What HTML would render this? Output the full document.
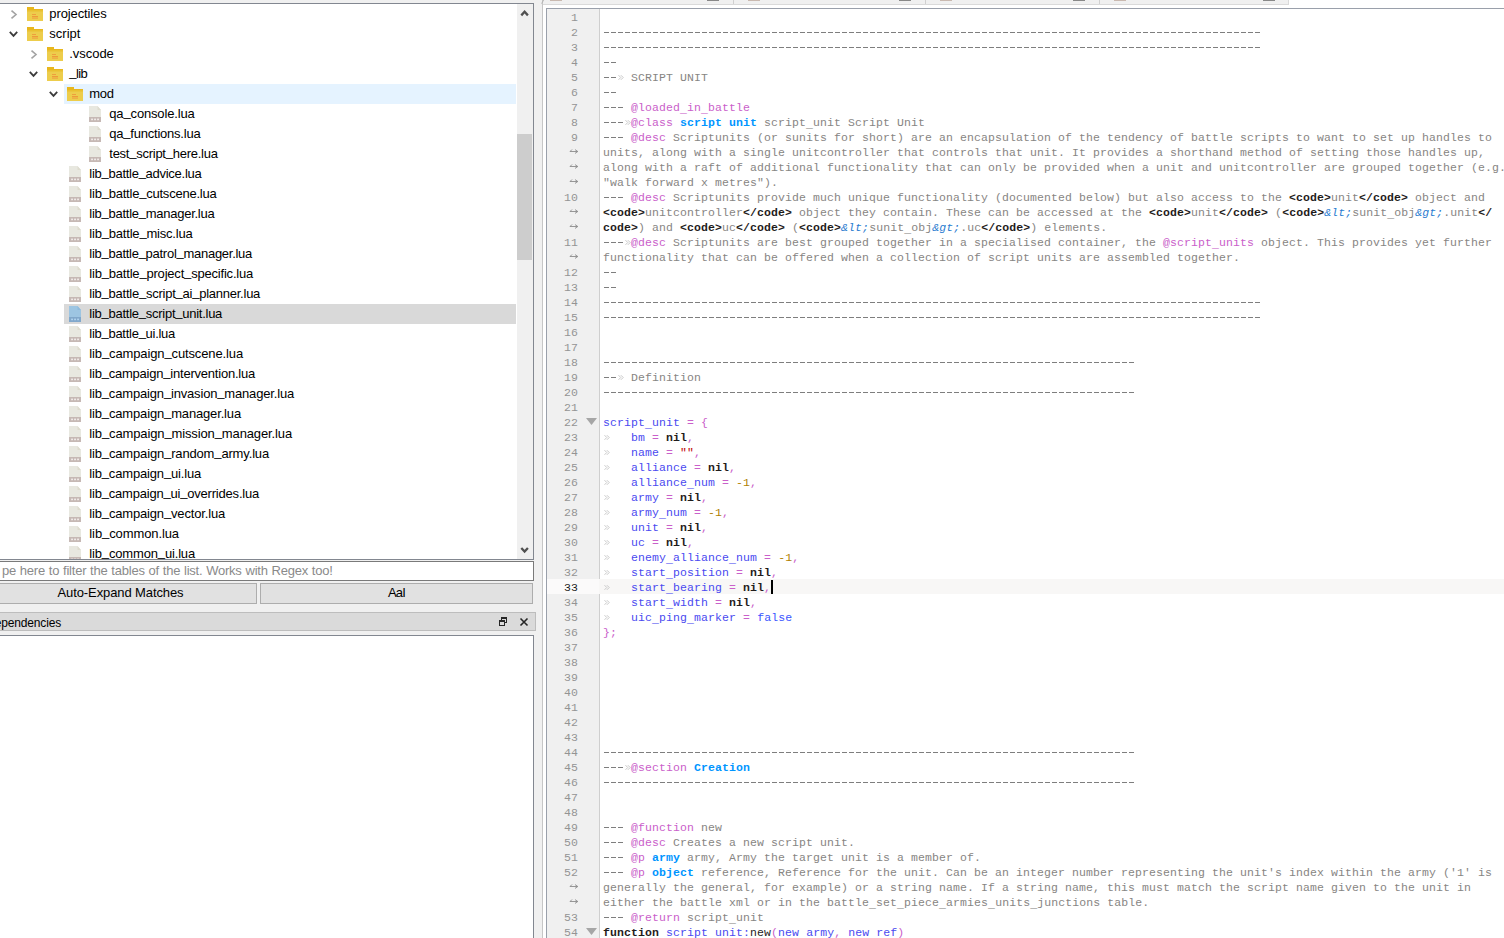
<!DOCTYPE html>
<html><head><meta charset="utf-8"><title>RPFM</title>
<style>
html,body{margin:0;padding:0}
body{width:1504px;height:938px;overflow:hidden;position:relative;background:#f0f0f0;font-family:"Liberation Sans",sans-serif;font-size:13px;color:#000}
.abs{position:absolute;box-sizing:border-box}
.tl{position:absolute;height:20px;line-height:20px;white-space:pre;font-size:13px;color:#000}
.ic,.ar{display:block}
#tree{left:-2px;top:3px;width:536px;height:557px;border:1px solid #828790;background:#fff}
#sb{left:517px;top:4px;width:16px;height:555px;background:#f0f0f0}
#thumb{left:517px;top:134px;width:15px;height:126px;background:#cdcdcd}
#filter{left:-2px;top:561px;width:536px;height:20px;border:1px solid #7a7a7a;background:#fff}
.btn{height:21px;top:583px;border:1px solid #adadad;background:#e1e1e1;text-align:center;line-height:18px;white-space:pre}
#dephead{left:-2px;top:612px;width:538px;height:19px;background:#dadada;border:1px solid #bdbdbd}
#dep{left:-2px;top:635px;width:536px;height:320px;border:1px solid #828790;background:#fff}
#tabpane{left:542px;top:-2px;width:980px;height:956px;border:1px solid #c6c6c6;background:#fff}
#editor{left:546px;top:8px;width:980px;height:950px;border:1px solid #9aa0ab;background:#fff;overflow:hidden}
#gutter{left:547px;top:9px;width:53px;height:940px;background:#f0f0f0;border-right:1px solid #cfcfcf}
#code{left:547px;top:9px;width:957px;height:929px;font-family:"Liberation Mono",monospace;font-size:11.5px;letter-spacing:0.099px;overflow:hidden}
.row{position:absolute;left:0;width:957px;height:15px;line-height:15px;white-space:pre}
.row.cur{background:#f8f7f6}
.g{position:absolute;left:0;top:0;width:52px;height:15px;color:#949494}
.row.cur .g{background:#fbfafa;color:#1e1e1e}
.ln{position:absolute;right:21px;top:1px}
.tx{position:absolute;left:56px;top:1px;height:15px;color:#1f1c1b}
.c{color:#878583}
.d{display:inline-block;height:13px;vertical-align:top;color:transparent;background:repeating-linear-gradient(90deg,rgba(128,128,128,0) 0,rgba(128,128,128,0) 0.6px,#7e7e7e 1.1px,#7e7e7e 5.9px,rgba(128,128,128,0) 6.4px,rgba(128,128,128,0) 7px) 0 7px/100% 1px no-repeat}
.a{color:#ca60ca}
.e{color:#0095ff;font-weight:bold}
i.u{font-style:normal;color:transparent}
i.us{font-style:normal;position:relative;top:2px}
i.tu{font-style:normal;position:relative;top:-2px}
.k{color:#1f1c1b;font-weight:bold}
.v{color:#4a4af0}
.o{color:#ca60ca}
.n{color:#b08000}
.s{color:#bf0303}
.en{color:#2a7cd0;font-style:italic}
.f{color:#3a55ff}
.t{display:inline-block;height:15px;vertical-align:top;position:relative}
.t svg{position:absolute;left:1px;top:5px}
.caret{display:inline-block;width:2px;height:14px;background:#000;vertical-align:top;margin-right:-2px}
</style></head><body>
<!-- left: file tree -->
<div id="tree" class="abs"></div>
<div class="abs" style="left:0;top:0;width:533px;height:559px;overflow:hidden">

<div style="position:absolute;left:9px;top:8px"><svg class="ar" width="9" height="12" viewBox="0 0 9 12"><path d="M2.5 2.7L7 6.5L2.5 10.3" fill="none" stroke="#a3a3a3" stroke-width="1.6"/></svg></div>
<div style="position:absolute;left:27px;top:7px"><svg class="ic" width="16" height="14" viewBox="0 0 16 14"><rect x="0" y="0" width="7" height="3" fill="#e8b71e"/><rect x="0" y="2" width="16" height="12" fill="#edcd4c"/><rect x="0" y="2" width="16" height="1.6" fill="#e8b71e"/><rect x="0" y="3.6" width="16" height="1" fill="#eac236"/><rect x="5" y="7" width="4" height="1" fill="#ee9e3e"/><rect x="5" y="9" width="6" height="1.4" fill="#ee9a3a"/><rect x="5" y="11" width="6" height="1" fill="#efae48"/></svg></div>
<div class="tl" style="left:49.3px;top:4px;letter-spacing:-0.112px">projectiles</div>

<div style="position:absolute;left:8px;top:31px"><svg class="ar" width="11" height="7" viewBox="0 0 11 7"><path d="M1.8 0.8L5.5 4.8L9.2 0.8" fill="none" stroke="#3c3c3c" stroke-width="1.8"/></svg></div>
<div style="position:absolute;left:27px;top:27px"><svg class="ic" width="16" height="14" viewBox="0 0 16 14"><rect x="0" y="0" width="7" height="3" fill="#e8b71e"/><rect x="0" y="2" width="16" height="12" fill="#edcd4c"/><rect x="0" y="2" width="16" height="1.6" fill="#e8b71e"/><rect x="0" y="3.6" width="16" height="1" fill="#eac236"/><rect x="5" y="7" width="4" height="1" fill="#ee9e3e"/><rect x="5" y="9" width="6" height="1.4" fill="#ee9a3a"/><rect x="5" y="11" width="6" height="1" fill="#efae48"/></svg></div>
<div class="tl" style="left:49.3px;top:24px;letter-spacing:0.006px">script</div>

<div style="position:absolute;left:29px;top:48px"><svg class="ar" width="9" height="12" viewBox="0 0 9 12"><path d="M2.5 2.7L7 6.5L2.5 10.3" fill="none" stroke="#a3a3a3" stroke-width="1.6"/></svg></div>
<div style="position:absolute;left:47px;top:47px"><svg class="ic" width="16" height="14" viewBox="0 0 16 14"><rect x="0" y="0" width="7" height="3" fill="#e8b71e"/><rect x="0" y="2" width="16" height="12" fill="#edcd4c"/><rect x="0" y="2" width="16" height="1.6" fill="#e8b71e"/><rect x="0" y="3.6" width="16" height="1" fill="#eac236"/><rect x="5" y="7" width="4" height="1" fill="#ee9e3e"/><rect x="5" y="9" width="6" height="1.4" fill="#ee9a3a"/><rect x="5" y="11" width="6" height="1" fill="#efae48"/></svg></div>
<div class="tl" style="left:69.3px;top:44px;letter-spacing:-0.045px">.vscode</div>

<div style="position:absolute;left:28px;top:71px"><svg class="ar" width="11" height="7" viewBox="0 0 11 7"><path d="M1.8 0.8L5.5 4.8L9.2 0.8" fill="none" stroke="#3c3c3c" stroke-width="1.8"/></svg></div>
<div style="position:absolute;left:47px;top:67px"><svg class="ic" width="16" height="14" viewBox="0 0 16 14"><rect x="0" y="0" width="7" height="3" fill="#e8b71e"/><rect x="0" y="2" width="16" height="12" fill="#edcd4c"/><rect x="0" y="2" width="16" height="1.6" fill="#e8b71e"/><rect x="0" y="3.6" width="16" height="1" fill="#eac236"/><rect x="5" y="7" width="4" height="1" fill="#ee9e3e"/><rect x="5" y="9" width="6" height="1.4" fill="#ee9a3a"/><rect x="5" y="11" width="6" height="1" fill="#efae48"/></svg></div>
<div class="tl" style="left:69.3px;top:64px;letter-spacing:-0.562px"><i class="tu">_</i>lib</div>
<div style="position:absolute;left:64px;top:84px;width:452px;height:20px;background:#e5f3ff"></div>
<div style="position:absolute;left:48px;top:91px"><svg class="ar" width="11" height="7" viewBox="0 0 11 7"><path d="M1.8 0.8L5.5 4.8L9.2 0.8" fill="none" stroke="#3c3c3c" stroke-width="1.8"/></svg></div>
<div style="position:absolute;left:67px;top:87px"><svg class="ic" width="16" height="14" viewBox="0 0 16 14"><rect x="0" y="0" width="7" height="3" fill="#e8b71e"/><rect x="0" y="2" width="16" height="12" fill="#edcd4c"/><rect x="0" y="2" width="16" height="1.6" fill="#e8b71e"/><rect x="0" y="3.6" width="16" height="1" fill="#eac236"/><rect x="5" y="7" width="4" height="1" fill="#ee9e3e"/><rect x="5" y="9" width="6" height="1.4" fill="#ee9a3a"/><rect x="5" y="11" width="6" height="1" fill="#efae48"/></svg></div>
<div class="tl" style="left:89.3px;top:84px;letter-spacing:-0.266px">mod</div>

<div style="position:absolute;left:89px;top:106px"><svg class="ic" width="12" height="16" viewBox="0 0 12 16"><path d="M0 0h8.5l3.5 4v8H0z" fill="#e8e8e0"/><path d="M8.5 0v4h3.5z" fill="#dedccf"/><rect x="0" y="11" width="12" height="5" fill="#c6b9b5"/><rect x="2.2" y="12.6" width="1.7" height="1.6" fill="#f4f0ee"/><rect x="5.2" y="12.6" width="1.7" height="1.6" fill="#f4f0ee"/><rect x="8.2" y="12.6" width="1.7" height="1.6" fill="#f4f0ee"/></svg></div>
<div class="tl" style="left:109.3px;top:104px;letter-spacing:-0.155px">qa<i class="tu">_</i>console.lua</div>

<div style="position:absolute;left:89px;top:126px"><svg class="ic" width="12" height="16" viewBox="0 0 12 16"><path d="M0 0h8.5l3.5 4v8H0z" fill="#e8e8e0"/><path d="M8.5 0v4h3.5z" fill="#dedccf"/><rect x="0" y="11" width="12" height="5" fill="#c6b9b5"/><rect x="2.2" y="12.6" width="1.7" height="1.6" fill="#f4f0ee"/><rect x="5.2" y="12.6" width="1.7" height="1.6" fill="#f4f0ee"/><rect x="8.2" y="12.6" width="1.7" height="1.6" fill="#f4f0ee"/></svg></div>
<div class="tl" style="left:109.3px;top:124px;letter-spacing:-0.224px">qa<i class="tu">_</i>functions.lua</div>

<div style="position:absolute;left:89px;top:146px"><svg class="ic" width="12" height="16" viewBox="0 0 12 16"><path d="M0 0h8.5l3.5 4v8H0z" fill="#e8e8e0"/><path d="M8.5 0v4h3.5z" fill="#dedccf"/><rect x="0" y="11" width="12" height="5" fill="#c6b9b5"/><rect x="2.2" y="12.6" width="1.7" height="1.6" fill="#f4f0ee"/><rect x="5.2" y="12.6" width="1.7" height="1.6" fill="#f4f0ee"/><rect x="8.2" y="12.6" width="1.7" height="1.6" fill="#f4f0ee"/></svg></div>
<div class="tl" style="left:109.3px;top:144px;letter-spacing:-0.258px">test<i class="tu">_</i>script<i class="tu">_</i>here.lua</div>

<div style="position:absolute;left:69px;top:166px"><svg class="ic" width="12" height="16" viewBox="0 0 12 16"><path d="M0 0h8.5l3.5 4v8H0z" fill="#e8e8e0"/><path d="M8.5 0v4h3.5z" fill="#dedccf"/><rect x="0" y="11" width="12" height="5" fill="#c6b9b5"/><rect x="2.2" y="12.6" width="1.7" height="1.6" fill="#f4f0ee"/><rect x="5.2" y="12.6" width="1.7" height="1.6" fill="#f4f0ee"/><rect x="8.2" y="12.6" width="1.7" height="1.6" fill="#f4f0ee"/></svg></div>
<div class="tl" style="left:89.3px;top:164px;letter-spacing:-0.272px">lib<i class="tu">_</i>battle<i class="tu">_</i>advice.lua</div>

<div style="position:absolute;left:69px;top:186px"><svg class="ic" width="12" height="16" viewBox="0 0 12 16"><path d="M0 0h8.5l3.5 4v8H0z" fill="#e8e8e0"/><path d="M8.5 0v4h3.5z" fill="#dedccf"/><rect x="0" y="11" width="12" height="5" fill="#c6b9b5"/><rect x="2.2" y="12.6" width="1.7" height="1.6" fill="#f4f0ee"/><rect x="5.2" y="12.6" width="1.7" height="1.6" fill="#f4f0ee"/><rect x="8.2" y="12.6" width="1.7" height="1.6" fill="#f4f0ee"/></svg></div>
<div class="tl" style="left:89.3px;top:184px;letter-spacing:-0.220px">lib<i class="tu">_</i>battle<i class="tu">_</i>cutscene.lua</div>

<div style="position:absolute;left:69px;top:206px"><svg class="ic" width="12" height="16" viewBox="0 0 12 16"><path d="M0 0h8.5l3.5 4v8H0z" fill="#e8e8e0"/><path d="M8.5 0v4h3.5z" fill="#dedccf"/><rect x="0" y="11" width="12" height="5" fill="#c6b9b5"/><rect x="2.2" y="12.6" width="1.7" height="1.6" fill="#f4f0ee"/><rect x="5.2" y="12.6" width="1.7" height="1.6" fill="#f4f0ee"/><rect x="8.2" y="12.6" width="1.7" height="1.6" fill="#f4f0ee"/></svg></div>
<div class="tl" style="left:89.3px;top:204px;letter-spacing:-0.260px">lib<i class="tu">_</i>battle<i class="tu">_</i>manager.lua</div>

<div style="position:absolute;left:69px;top:226px"><svg class="ic" width="12" height="16" viewBox="0 0 12 16"><path d="M0 0h8.5l3.5 4v8H0z" fill="#e8e8e0"/><path d="M8.5 0v4h3.5z" fill="#dedccf"/><rect x="0" y="11" width="12" height="5" fill="#c6b9b5"/><rect x="2.2" y="12.6" width="1.7" height="1.6" fill="#f4f0ee"/><rect x="5.2" y="12.6" width="1.7" height="1.6" fill="#f4f0ee"/><rect x="8.2" y="12.6" width="1.7" height="1.6" fill="#f4f0ee"/></svg></div>
<div class="tl" style="left:89.3px;top:224px;letter-spacing:-0.198px">lib<i class="tu">_</i>battle<i class="tu">_</i>misc.lua</div>

<div style="position:absolute;left:69px;top:246px"><svg class="ic" width="12" height="16" viewBox="0 0 12 16"><path d="M0 0h8.5l3.5 4v8H0z" fill="#e8e8e0"/><path d="M8.5 0v4h3.5z" fill="#dedccf"/><rect x="0" y="11" width="12" height="5" fill="#c6b9b5"/><rect x="2.2" y="12.6" width="1.7" height="1.6" fill="#f4f0ee"/><rect x="5.2" y="12.6" width="1.7" height="1.6" fill="#f4f0ee"/><rect x="8.2" y="12.6" width="1.7" height="1.6" fill="#f4f0ee"/></svg></div>
<div class="tl" style="left:89.3px;top:244px;letter-spacing:-0.272px">lib<i class="tu">_</i>battle<i class="tu">_</i>patrol<i class="tu">_</i>manager.lua</div>

<div style="position:absolute;left:69px;top:266px"><svg class="ic" width="12" height="16" viewBox="0 0 12 16"><path d="M0 0h8.5l3.5 4v8H0z" fill="#e8e8e0"/><path d="M8.5 0v4h3.5z" fill="#dedccf"/><rect x="0" y="11" width="12" height="5" fill="#c6b9b5"/><rect x="2.2" y="12.6" width="1.7" height="1.6" fill="#f4f0ee"/><rect x="5.2" y="12.6" width="1.7" height="1.6" fill="#f4f0ee"/><rect x="8.2" y="12.6" width="1.7" height="1.6" fill="#f4f0ee"/></svg></div>
<div class="tl" style="left:89.3px;top:264px;letter-spacing:-0.198px">lib<i class="tu">_</i>battle<i class="tu">_</i>project<i class="tu">_</i>specific.lua</div>

<div style="position:absolute;left:69px;top:286px"><svg class="ic" width="12" height="16" viewBox="0 0 12 16"><path d="M0 0h8.5l3.5 4v8H0z" fill="#e8e8e0"/><path d="M8.5 0v4h3.5z" fill="#dedccf"/><rect x="0" y="11" width="12" height="5" fill="#c6b9b5"/><rect x="2.2" y="12.6" width="1.7" height="1.6" fill="#f4f0ee"/><rect x="5.2" y="12.6" width="1.7" height="1.6" fill="#f4f0ee"/><rect x="8.2" y="12.6" width="1.7" height="1.6" fill="#f4f0ee"/></svg></div>
<div class="tl" style="left:89.3px;top:284px;letter-spacing:-0.244px">lib<i class="tu">_</i>battle<i class="tu">_</i>script<i class="tu">_</i>ai<i class="tu">_</i>planner.lua</div>
<div style="position:absolute;left:64px;top:304px;width:452px;height:20px;background:#d9d9d9"></div>
<div style="position:absolute;left:69px;top:306px"><svg class="ic" width="12" height="16" viewBox="0 0 12 16"><path d="M0 0h8.5l3.5 4v8H0z" fill="#9dc5e2"/><path d="M8.5 0v4h3.5z" fill="#8fbadb"/><rect x="0" y="11" width="12" height="5" fill="#81a8cb"/><rect x="2.2" y="12.6" width="1.7" height="1.6" fill="#b4d6f2"/><rect x="5.2" y="12.6" width="1.7" height="1.6" fill="#b4d6f2"/><rect x="8.2" y="12.6" width="1.7" height="1.6" fill="#b4d6f2"/></svg></div>
<div class="tl" style="left:89.3px;top:304px;letter-spacing:-0.261px">lib<i class="tu">_</i>battle<i class="tu">_</i>script<i class="tu">_</i>unit.lua</div>

<div style="position:absolute;left:69px;top:326px"><svg class="ic" width="12" height="16" viewBox="0 0 12 16"><path d="M0 0h8.5l3.5 4v8H0z" fill="#e8e8e0"/><path d="M8.5 0v4h3.5z" fill="#dedccf"/><rect x="0" y="11" width="12" height="5" fill="#c6b9b5"/><rect x="2.2" y="12.6" width="1.7" height="1.6" fill="#f4f0ee"/><rect x="5.2" y="12.6" width="1.7" height="1.6" fill="#f4f0ee"/><rect x="8.2" y="12.6" width="1.7" height="1.6" fill="#f4f0ee"/></svg></div>
<div class="tl" style="left:89.3px;top:324px;letter-spacing:-0.274px">lib<i class="tu">_</i>battle<i class="tu">_</i>ui.lua</div>

<div style="position:absolute;left:69px;top:346px"><svg class="ic" width="12" height="16" viewBox="0 0 12 16"><path d="M0 0h8.5l3.5 4v8H0z" fill="#e8e8e0"/><path d="M8.5 0v4h3.5z" fill="#dedccf"/><rect x="0" y="11" width="12" height="5" fill="#c6b9b5"/><rect x="2.2" y="12.6" width="1.7" height="1.6" fill="#f4f0ee"/><rect x="5.2" y="12.6" width="1.7" height="1.6" fill="#f4f0ee"/><rect x="8.2" y="12.6" width="1.7" height="1.6" fill="#f4f0ee"/></svg></div>
<div class="tl" style="left:89.3px;top:344px;letter-spacing:-0.125px">lib<i class="tu">_</i>campaign<i class="tu">_</i>cutscene.lua</div>

<div style="position:absolute;left:69px;top:366px"><svg class="ic" width="12" height="16" viewBox="0 0 12 16"><path d="M0 0h8.5l3.5 4v8H0z" fill="#e8e8e0"/><path d="M8.5 0v4h3.5z" fill="#dedccf"/><rect x="0" y="11" width="12" height="5" fill="#c6b9b5"/><rect x="2.2" y="12.6" width="1.7" height="1.6" fill="#f4f0ee"/><rect x="5.2" y="12.6" width="1.7" height="1.6" fill="#f4f0ee"/><rect x="8.2" y="12.6" width="1.7" height="1.6" fill="#f4f0ee"/></svg></div>
<div class="tl" style="left:89.3px;top:364px;letter-spacing:-0.218px">lib<i class="tu">_</i>campaign<i class="tu">_</i>intervention.lua</div>

<div style="position:absolute;left:69px;top:386px"><svg class="ic" width="12" height="16" viewBox="0 0 12 16"><path d="M0 0h8.5l3.5 4v8H0z" fill="#e8e8e0"/><path d="M8.5 0v4h3.5z" fill="#dedccf"/><rect x="0" y="11" width="12" height="5" fill="#c6b9b5"/><rect x="2.2" y="12.6" width="1.7" height="1.6" fill="#f4f0ee"/><rect x="5.2" y="12.6" width="1.7" height="1.6" fill="#f4f0ee"/><rect x="8.2" y="12.6" width="1.7" height="1.6" fill="#f4f0ee"/></svg></div>
<div class="tl" style="left:89.3px;top:384px;letter-spacing:-0.170px">lib<i class="tu">_</i>campaign<i class="tu">_</i>invasion<i class="tu">_</i>manager.lua</div>

<div style="position:absolute;left:69px;top:406px"><svg class="ic" width="12" height="16" viewBox="0 0 12 16"><path d="M0 0h8.5l3.5 4v8H0z" fill="#e8e8e0"/><path d="M8.5 0v4h3.5z" fill="#dedccf"/><rect x="0" y="11" width="12" height="5" fill="#c6b9b5"/><rect x="2.2" y="12.6" width="1.7" height="1.6" fill="#f4f0ee"/><rect x="5.2" y="12.6" width="1.7" height="1.6" fill="#f4f0ee"/><rect x="8.2" y="12.6" width="1.7" height="1.6" fill="#f4f0ee"/></svg></div>
<div class="tl" style="left:89.3px;top:404px;letter-spacing:-0.154px">lib<i class="tu">_</i>campaign<i class="tu">_</i>manager.lua</div>

<div style="position:absolute;left:69px;top:426px"><svg class="ic" width="12" height="16" viewBox="0 0 12 16"><path d="M0 0h8.5l3.5 4v8H0z" fill="#e8e8e0"/><path d="M8.5 0v4h3.5z" fill="#dedccf"/><rect x="0" y="11" width="12" height="5" fill="#c6b9b5"/><rect x="2.2" y="12.6" width="1.7" height="1.6" fill="#f4f0ee"/><rect x="5.2" y="12.6" width="1.7" height="1.6" fill="#f4f0ee"/><rect x="8.2" y="12.6" width="1.7" height="1.6" fill="#f4f0ee"/></svg></div>
<div class="tl" style="left:89.3px;top:424px;letter-spacing:-0.125px">lib<i class="tu">_</i>campaign<i class="tu">_</i>mission<i class="tu">_</i>manager.lua</div>

<div style="position:absolute;left:69px;top:446px"><svg class="ic" width="12" height="16" viewBox="0 0 12 16"><path d="M0 0h8.5l3.5 4v8H0z" fill="#e8e8e0"/><path d="M8.5 0v4h3.5z" fill="#dedccf"/><rect x="0" y="11" width="12" height="5" fill="#c6b9b5"/><rect x="2.2" y="12.6" width="1.7" height="1.6" fill="#f4f0ee"/><rect x="5.2" y="12.6" width="1.7" height="1.6" fill="#f4f0ee"/><rect x="8.2" y="12.6" width="1.7" height="1.6" fill="#f4f0ee"/></svg></div>
<div class="tl" style="left:89.3px;top:444px;letter-spacing:-0.155px">lib<i class="tu">_</i>campaign<i class="tu">_</i>random<i class="tu">_</i>army.lua</div>

<div style="position:absolute;left:69px;top:466px"><svg class="ic" width="12" height="16" viewBox="0 0 12 16"><path d="M0 0h8.5l3.5 4v8H0z" fill="#e8e8e0"/><path d="M8.5 0v4h3.5z" fill="#dedccf"/><rect x="0" y="11" width="12" height="5" fill="#c6b9b5"/><rect x="2.2" y="12.6" width="1.7" height="1.6" fill="#f4f0ee"/><rect x="5.2" y="12.6" width="1.7" height="1.6" fill="#f4f0ee"/><rect x="8.2" y="12.6" width="1.7" height="1.6" fill="#f4f0ee"/></svg></div>
<div class="tl" style="left:89.3px;top:464px;letter-spacing:-0.170px">lib<i class="tu">_</i>campaign<i class="tu">_</i>ui.lua</div>

<div style="position:absolute;left:69px;top:486px"><svg class="ic" width="12" height="16" viewBox="0 0 12 16"><path d="M0 0h8.5l3.5 4v8H0z" fill="#e8e8e0"/><path d="M8.5 0v4h3.5z" fill="#dedccf"/><rect x="0" y="11" width="12" height="5" fill="#c6b9b5"/><rect x="2.2" y="12.6" width="1.7" height="1.6" fill="#f4f0ee"/><rect x="5.2" y="12.6" width="1.7" height="1.6" fill="#f4f0ee"/><rect x="8.2" y="12.6" width="1.7" height="1.6" fill="#f4f0ee"/></svg></div>
<div class="tl" style="left:89.3px;top:484px;letter-spacing:-0.204px">lib<i class="tu">_</i>campaign<i class="tu">_</i>ui<i class="tu">_</i>overrides.lua</div>

<div style="position:absolute;left:69px;top:506px"><svg class="ic" width="12" height="16" viewBox="0 0 12 16"><path d="M0 0h8.5l3.5 4v8H0z" fill="#e8e8e0"/><path d="M8.5 0v4h3.5z" fill="#dedccf"/><rect x="0" y="11" width="12" height="5" fill="#c6b9b5"/><rect x="2.2" y="12.6" width="1.7" height="1.6" fill="#f4f0ee"/><rect x="5.2" y="12.6" width="1.7" height="1.6" fill="#f4f0ee"/><rect x="8.2" y="12.6" width="1.7" height="1.6" fill="#f4f0ee"/></svg></div>
<div class="tl" style="left:89.3px;top:504px;letter-spacing:-0.165px">lib<i class="tu">_</i>campaign<i class="tu">_</i>vector.lua</div>

<div style="position:absolute;left:69px;top:526px"><svg class="ic" width="12" height="16" viewBox="0 0 12 16"><path d="M0 0h8.5l3.5 4v8H0z" fill="#e8e8e0"/><path d="M8.5 0v4h3.5z" fill="#dedccf"/><rect x="0" y="11" width="12" height="5" fill="#c6b9b5"/><rect x="2.2" y="12.6" width="1.7" height="1.6" fill="#f4f0ee"/><rect x="5.2" y="12.6" width="1.7" height="1.6" fill="#f4f0ee"/><rect x="8.2" y="12.6" width="1.7" height="1.6" fill="#f4f0ee"/></svg></div>
<div class="tl" style="left:89.3px;top:524px;letter-spacing:-0.096px">lib<i class="tu">_</i>common.lua</div>

<div style="position:absolute;left:69px;top:546px"><svg class="ic" width="12" height="16" viewBox="0 0 12 16"><path d="M0 0h8.5l3.5 4v8H0z" fill="#e8e8e0"/><path d="M8.5 0v4h3.5z" fill="#dedccf"/><rect x="0" y="11" width="12" height="5" fill="#c6b9b5"/><rect x="2.2" y="12.6" width="1.7" height="1.6" fill="#f4f0ee"/><rect x="5.2" y="12.6" width="1.7" height="1.6" fill="#f4f0ee"/><rect x="8.2" y="12.6" width="1.7" height="1.6" fill="#f4f0ee"/></svg></div>
<div class="tl" style="left:89.3px;top:544px;letter-spacing:-0.159px">lib<i class="tu">_</i>common<i class="tu">_</i>ui.lua</div>
</div>
<div id="sb" class="abs"></div>
<div id="thumb" class="abs"></div>
<svg class="abs" style="left:520px;top:9px" width="10" height="8" viewBox="0 0 10 8"><path d="M1.3 6.4L4.6 2.8L7.9 6.4" fill="none" stroke="#505050" stroke-width="2.3"/></svg>
<svg class="abs" style="left:520px;top:546px" width="10" height="8" viewBox="0 0 10 8"><path d="M1.3 2.0L4.6 5.6L7.9 2.0" fill="none" stroke="#505050" stroke-width="2.3"/></svg>
<div id="filter" class="abs"></div>
<div class="tl" style="left:2px;top:561px;color:#8a8a8a;letter-spacing:-0.230px;word-spacing:0.477px">pe here to filter the tables of the list. Works with Regex too!</div>
<div class="btn abs" style="left:-20px;width:277px;padding-left:4px;letter-spacing:-0.100px">Auto-Expand Matches</div>
<div class="btn abs" style="left:260px;width:273px;letter-spacing:-0.839px">AaI</div>
<div id="dephead" class="abs"></div>
<div class="tl" style="left:-5.22px;top:613px;font-size:12px;letter-spacing:-0.169px">ependencies</div>
<svg class="abs" style="left:499px;top:617px" width="8" height="9" viewBox="0 0 8 9" shape-rendering="crispEdges"><g fill="#262626"><rect x="2" y="0" width="6" height="2"/><rect x="7" y="0" width="1" height="6"/><rect x="6" y="5" width="2" height="1"/><rect x="2" y="0" width="1" height="3"/><rect x="0" y="3" width="6" height="2"/><rect x="0" y="3" width="1" height="6"/><rect x="5" y="3" width="1" height="6"/><rect x="0" y="8" width="6" height="1"/></g></svg>
<svg class="abs" style="left:519px;top:617px" width="10" height="10" viewBox="0 0 10 10"><path d="M1.5 1.5L8.5 8.5M8.5 1.5L1.5 8.5" stroke="#262626" stroke-width="1.6"/></svg>
<div id="dep" class="abs"></div>
<!-- right: tab bar remnants + editor -->
<div id="tabpane" class="abs"></div>
<div class="abs" style="left:543px;top:0;width:746px;height:5px;background:#f0f0f0;border-bottom:1px solid #dadada;border-right:1px solid #dadada"></div>
<div class="abs" style="left:550px;top:0;width:12px;height:1px;background:#c9b9b0"></div>
<div class="abs" style="left:707px;top:0;width:12px;height:1px;background:#888"></div>
<div class="abs" style="left:733px;top:0;width:1px;height:4px;background:#d0d0d0"></div>
<div class="abs" style="left:748px;top:0;width:12px;height:1px;background:#c9b9b0"></div>
<div class="abs" style="left:899px;top:0;width:12px;height:1px;background:#888"></div>
<div class="abs" style="left:925px;top:0;width:1px;height:4px;background:#d0d0d0"></div>
<div class="abs" style="left:940px;top:0;width:12px;height:1px;background:#c9b9b0"></div>
<div class="abs" style="left:1073px;top:0;width:12px;height:1px;background:#888"></div>
<div class="abs" style="left:1099px;top:0;width:1px;height:4px;background:#d0d0d0"></div>
<div class="abs" style="left:1114px;top:0;width:12px;height:1px;background:#c9b9b0"></div>
<div class="abs" style="left:1263px;top:0;width:12px;height:1px;background:#888"></div>
<svg class="abs" style="left:540px;top:0" width="5" height="4" viewBox="0 0 5 4"><path d="M3.6 0L1.6 3.6" stroke="#b4b4b4" stroke-width="1" fill="none"/></svg>
<div id="editor" class="abs"></div>
<div id="gutter" class="abs"></div>
<div id="code" class="abs">
<div class="row" style="top:0px"><div class="g"><span class="ln">1</span></div><div class="tx"></div></div>
<div class="row" style="top:15px"><div class="g"><span class="ln">2</span></div><div class="tx"><span class="d" style="width:658px">----------------------------------------------------------------------------------------------</span></div></div>
<div class="row" style="top:30px"><div class="g"><span class="ln">3</span></div><div class="tx"><span class="d" style="width:658px">----------------------------------------------------------------------------------------------</span></div></div>
<div class="row" style="top:45px"><div class="g"><span class="ln">4</span></div><div class="tx"><span class="d" style="width:14px">--</span></div></div>
<div class="row" style="top:60px"><div class="g"><span class="ln">5</span></div><div class="tx"><span class="d" style="width:14px">--</span><span class="t" style="width:14px"><svg width="6" height="5" viewBox="0 0 6 5"><path d="M0.5 0.2l2.3 2.3l-2.3 2.3M2.9 0.2l2.3 2.3l-2.3 2.3" fill="none" stroke="#c2c2c2" stroke-width="0.9"/></svg></span><span class="c">SCRIPT UNIT</span></div></div>
<div class="row" style="top:75px"><div class="g"><span class="ln">6</span></div><div class="tx"><span class="d" style="width:14px">--</span></div></div>
<div class="row" style="top:90px"><div class="g"><span class="ln">7</span></div><div class="tx"><span class="d" style="width:21px">---</span><span class="c"> </span><span class="a">@loaded<i class="us">_</i>in<i class="us">_</i>battle</span></div></div>
<div class="row" style="top:105px"><div class="g"><span class="ln">8</span></div><div class="tx"><span class="d" style="width:21px">---</span><span class="t" style="width:7px"><svg width="6" height="5" viewBox="0 0 6 5"><path d="M0.5 0.2l2.3 2.3l-2.3 2.3M2.9 0.2l2.3 2.3l-2.3 2.3" fill="none" stroke="#c2c2c2" stroke-width="0.9"/></svg></span><span class="a">@class</span><span class="c"> </span><span class="e">script<i class=u>_</i>unit</span><span class="c"> script<i class="us">_</i>unit Script Unit</span></div></div>
<div class="row" style="top:120px"><div class="g"><span class="ln">9</span></div><div class="tx"><span class="d" style="width:21px">---</span><span class="c"> </span><span class="a">@desc</span><span class="c"> Scriptunits (or sunits for short) are an encapsulation of the tendency of battle scripts to want to set up handles to </span></div></div>
<div class="row" style="top:135px"><div class="g"><svg width="10" height="5" viewBox="0 0 10 5" style="position:absolute;right:20px;top:5px"><path d="M3 0.5L1 2.5H8.6M6 0.6L8.8 2.5L6 4.4" fill="none" stroke="#8c8c8c" stroke-width="0.9"/></svg></div><div class="tx"><span class="c">units, along with a single unitcontroller that controls that unit. It provides a shorthand method of setting those handles up, </span></div></div>
<div class="row" style="top:150px"><div class="g"><svg width="10" height="5" viewBox="0 0 10 5" style="position:absolute;right:20px;top:5px"><path d="M3 0.5L1 2.5H8.6M6 0.6L8.8 2.5L6 4.4" fill="none" stroke="#8c8c8c" stroke-width="0.9"/></svg></div><div class="tx"><span class="c">along with a raft of additional functionality that can only be provided when a unit and unitcontroller are grouped together (e.g. </span></div></div>
<div class="row" style="top:165px"><div class="g"><svg width="10" height="5" viewBox="0 0 10 5" style="position:absolute;right:20px;top:5px"><path d="M3 0.5L1 2.5H8.6M6 0.6L8.8 2.5L6 4.4" fill="none" stroke="#8c8c8c" stroke-width="0.9"/></svg></div><div class="tx"><span class="c">&quot;walk forward x metres&quot;).</span></div></div>
<div class="row" style="top:180px"><div class="g"><span class="ln">10</span></div><div class="tx"><span class="d" style="width:21px">---</span><span class="c"> </span><span class="a">@desc</span><span class="c"> Scriptunits provide much unique functionality (documented below) but also access to the </span><span class="k">&lt;code&gt;</span><span class="c">unit</span><span class="k">&lt;/code&gt;</span><span class="c"> object and </span></div></div>
<div class="row" style="top:195px"><div class="g"><svg width="10" height="5" viewBox="0 0 10 5" style="position:absolute;right:20px;top:5px"><path d="M3 0.5L1 2.5H8.6M6 0.6L8.8 2.5L6 4.4" fill="none" stroke="#8c8c8c" stroke-width="0.9"/></svg></div><div class="tx"><span class="k">&lt;code&gt;</span><span class="c">unitcontroller</span><span class="k">&lt;/code&gt;</span><span class="c"> object they contain. These can be accessed at the </span><span class="k">&lt;code&gt;</span><span class="c">unit</span><span class="k">&lt;/code&gt;</span><span class="c"> (</span><span class="k">&lt;code&gt;</span><span class="en">&amp;lt;</span><span class="c">sunit<i class="us">_</i>obj</span><span class="en">&amp;gt;</span><span class="c">.unit</span><span class="k">&lt;/</span></div></div>
<div class="row" style="top:210px"><div class="g"><svg width="10" height="5" viewBox="0 0 10 5" style="position:absolute;right:20px;top:5px"><path d="M3 0.5L1 2.5H8.6M6 0.6L8.8 2.5L6 4.4" fill="none" stroke="#8c8c8c" stroke-width="0.9"/></svg></div><div class="tx"><span class="k">code&gt;</span><span class="c">) and </span><span class="k">&lt;code&gt;</span><span class="c">uc</span><span class="k">&lt;/code&gt;</span><span class="c"> (</span><span class="k">&lt;code&gt;</span><span class="en">&amp;lt;</span><span class="c">sunit<i class="us">_</i>obj</span><span class="en">&amp;gt;</span><span class="c">.uc</span><span class="k">&lt;/code&gt;</span><span class="c">) elements.</span></div></div>
<div class="row" style="top:225px"><div class="g"><span class="ln">11</span></div><div class="tx"><span class="d" style="width:21px">---</span><span class="t" style="width:7px"><svg width="6" height="5" viewBox="0 0 6 5"><path d="M0.5 0.2l2.3 2.3l-2.3 2.3M2.9 0.2l2.3 2.3l-2.3 2.3" fill="none" stroke="#c2c2c2" stroke-width="0.9"/></svg></span><span class="a">@desc</span><span class="c"> Scriptunits are best grouped together in a specialised container, the </span><span class="a">@script<i class="us">_</i>units</span><span class="c"> object. This provides yet further </span></div></div>
<div class="row" style="top:240px"><div class="g"><svg width="10" height="5" viewBox="0 0 10 5" style="position:absolute;right:20px;top:5px"><path d="M3 0.5L1 2.5H8.6M6 0.6L8.8 2.5L6 4.4" fill="none" stroke="#8c8c8c" stroke-width="0.9"/></svg></div><div class="tx"><span class="c">functionality that can be offered when a collection of script units are assembled together.</span></div></div>
<div class="row" style="top:255px"><div class="g"><span class="ln">12</span></div><div class="tx"><span class="d" style="width:14px">--</span></div></div>
<div class="row" style="top:270px"><div class="g"><span class="ln">13</span></div><div class="tx"><span class="d" style="width:14px">--</span></div></div>
<div class="row" style="top:285px"><div class="g"><span class="ln">14</span></div><div class="tx"><span class="d" style="width:658px">----------------------------------------------------------------------------------------------</span></div></div>
<div class="row" style="top:300px"><div class="g"><span class="ln">15</span></div><div class="tx"><span class="d" style="width:658px">----------------------------------------------------------------------------------------------</span></div></div>
<div class="row" style="top:315px"><div class="g"><span class="ln">16</span></div><div class="tx"></div></div>
<div class="row" style="top:330px"><div class="g"><span class="ln">17</span></div><div class="tx"></div></div>
<div class="row" style="top:345px"><div class="g"><span class="ln">18</span></div><div class="tx"><span class="d" style="width:532px">----------------------------------------------------------------------------</span></div></div>
<div class="row" style="top:360px"><div class="g"><span class="ln">19</span></div><div class="tx"><span class="d" style="width:14px">--</span><span class="t" style="width:14px"><svg width="6" height="5" viewBox="0 0 6 5"><path d="M0.5 0.2l2.3 2.3l-2.3 2.3M2.9 0.2l2.3 2.3l-2.3 2.3" fill="none" stroke="#c2c2c2" stroke-width="0.9"/></svg></span><span class="c">Definition</span></div></div>
<div class="row" style="top:375px"><div class="g"><span class="ln">20</span></div><div class="tx"><span class="d" style="width:532px">----------------------------------------------------------------------------</span></div></div>
<div class="row" style="top:390px"><div class="g"><span class="ln">21</span></div><div class="tx"></div></div>
<div class="row" style="top:405px"><div class="g"><span class="ln">22</span><svg width="11" height="7" viewBox="0 0 11 7" style="position:absolute;left:39px;top:4px"><path d="M0 0h11L5.5 7z" fill="#a6a6a6"/></svg></div><div class="tx"><span class="v">script<i class="us">_</i>unit</span> <span class="o">=</span> <span class="o">{</span></div></div>
<div class="row" style="top:420px"><div class="g"><span class="ln">23</span></div><div class="tx"><span class="t" style="width:28px"><svg width="6" height="5" viewBox="0 0 6 5"><path d="M0.5 0.2l2.3 2.3l-2.3 2.3M2.9 0.2l2.3 2.3l-2.3 2.3" fill="none" stroke="#c2c2c2" stroke-width="0.9"/></svg></span><span class="v">bm</span> <span class="o">=</span> <span class="k">nil</span><span class="o">,</span></div></div>
<div class="row" style="top:435px"><div class="g"><span class="ln">24</span></div><div class="tx"><span class="t" style="width:28px"><svg width="6" height="5" viewBox="0 0 6 5"><path d="M0.5 0.2l2.3 2.3l-2.3 2.3M2.9 0.2l2.3 2.3l-2.3 2.3" fill="none" stroke="#c2c2c2" stroke-width="0.9"/></svg></span><span class="v">name</span> <span class="o">=</span> <span class="s">&quot;&quot;</span><span class="o">,</span></div></div>
<div class="row" style="top:450px"><div class="g"><span class="ln">25</span></div><div class="tx"><span class="t" style="width:28px"><svg width="6" height="5" viewBox="0 0 6 5"><path d="M0.5 0.2l2.3 2.3l-2.3 2.3M2.9 0.2l2.3 2.3l-2.3 2.3" fill="none" stroke="#c2c2c2" stroke-width="0.9"/></svg></span><span class="v">alliance</span> <span class="o">=</span> <span class="k">nil</span><span class="o">,</span></div></div>
<div class="row" style="top:465px"><div class="g"><span class="ln">26</span></div><div class="tx"><span class="t" style="width:28px"><svg width="6" height="5" viewBox="0 0 6 5"><path d="M0.5 0.2l2.3 2.3l-2.3 2.3M2.9 0.2l2.3 2.3l-2.3 2.3" fill="none" stroke="#c2c2c2" stroke-width="0.9"/></svg></span><span class="v">alliance<i class="us">_</i>num</span> <span class="o">=</span> <span class="n">-1</span><span class="o">,</span></div></div>
<div class="row" style="top:480px"><div class="g"><span class="ln">27</span></div><div class="tx"><span class="t" style="width:28px"><svg width="6" height="5" viewBox="0 0 6 5"><path d="M0.5 0.2l2.3 2.3l-2.3 2.3M2.9 0.2l2.3 2.3l-2.3 2.3" fill="none" stroke="#c2c2c2" stroke-width="0.9"/></svg></span><span class="v">army</span> <span class="o">=</span> <span class="k">nil</span><span class="o">,</span></div></div>
<div class="row" style="top:495px"><div class="g"><span class="ln">28</span></div><div class="tx"><span class="t" style="width:28px"><svg width="6" height="5" viewBox="0 0 6 5"><path d="M0.5 0.2l2.3 2.3l-2.3 2.3M2.9 0.2l2.3 2.3l-2.3 2.3" fill="none" stroke="#c2c2c2" stroke-width="0.9"/></svg></span><span class="v">army<i class="us">_</i>num</span> <span class="o">=</span> <span class="n">-1</span><span class="o">,</span></div></div>
<div class="row" style="top:510px"><div class="g"><span class="ln">29</span></div><div class="tx"><span class="t" style="width:28px"><svg width="6" height="5" viewBox="0 0 6 5"><path d="M0.5 0.2l2.3 2.3l-2.3 2.3M2.9 0.2l2.3 2.3l-2.3 2.3" fill="none" stroke="#c2c2c2" stroke-width="0.9"/></svg></span><span class="v">unit</span> <span class="o">=</span> <span class="k">nil</span><span class="o">,</span></div></div>
<div class="row" style="top:525px"><div class="g"><span class="ln">30</span></div><div class="tx"><span class="t" style="width:28px"><svg width="6" height="5" viewBox="0 0 6 5"><path d="M0.5 0.2l2.3 2.3l-2.3 2.3M2.9 0.2l2.3 2.3l-2.3 2.3" fill="none" stroke="#c2c2c2" stroke-width="0.9"/></svg></span><span class="v">uc</span> <span class="o">=</span> <span class="k">nil</span><span class="o">,</span></div></div>
<div class="row" style="top:540px"><div class="g"><span class="ln">31</span></div><div class="tx"><span class="t" style="width:28px"><svg width="6" height="5" viewBox="0 0 6 5"><path d="M0.5 0.2l2.3 2.3l-2.3 2.3M2.9 0.2l2.3 2.3l-2.3 2.3" fill="none" stroke="#c2c2c2" stroke-width="0.9"/></svg></span><span class="v">enemy<i class="us">_</i>alliance<i class="us">_</i>num</span> <span class="o">=</span> <span class="n">-1</span><span class="o">,</span></div></div>
<div class="row" style="top:555px"><div class="g"><span class="ln">32</span></div><div class="tx"><span class="t" style="width:28px"><svg width="6" height="5" viewBox="0 0 6 5"><path d="M0.5 0.2l2.3 2.3l-2.3 2.3M2.9 0.2l2.3 2.3l-2.3 2.3" fill="none" stroke="#c2c2c2" stroke-width="0.9"/></svg></span><span class="v">start<i class="us">_</i>position</span> <span class="o">=</span> <span class="k">nil</span><span class="o">,</span></div></div>
<div class="row cur" style="top:570px"><div class="g"><span class="ln">33</span></div><div class="tx"><span class="t" style="width:28px"><svg width="6" height="5" viewBox="0 0 6 5"><path d="M0.5 0.2l2.3 2.3l-2.3 2.3M2.9 0.2l2.3 2.3l-2.3 2.3" fill="none" stroke="#c2c2c2" stroke-width="0.9"/></svg></span><span class="v">start<i class="us">_</i>bearing</span> <span class="o">=</span> <span class="k">nil</span><span class="o">,</span><span class="caret"></span></div></div>
<div class="row" style="top:585px"><div class="g"><span class="ln">34</span></div><div class="tx"><span class="t" style="width:28px"><svg width="6" height="5" viewBox="0 0 6 5"><path d="M0.5 0.2l2.3 2.3l-2.3 2.3M2.9 0.2l2.3 2.3l-2.3 2.3" fill="none" stroke="#c2c2c2" stroke-width="0.9"/></svg></span><span class="v">start<i class="us">_</i>width</span> <span class="o">=</span> <span class="k">nil</span><span class="o">,</span></div></div>
<div class="row" style="top:600px"><div class="g"><span class="ln">35</span></div><div class="tx"><span class="t" style="width:28px"><svg width="6" height="5" viewBox="0 0 6 5"><path d="M0.5 0.2l2.3 2.3l-2.3 2.3M2.9 0.2l2.3 2.3l-2.3 2.3" fill="none" stroke="#c2c2c2" stroke-width="0.9"/></svg></span><span class="v">uic<i class="us">_</i>ping<i class="us">_</i>marker</span> <span class="o">=</span> <span class="f">false</span></div></div>
<div class="row" style="top:615px"><div class="g"><span class="ln">36</span></div><div class="tx"><span class="o">};</span></div></div>
<div class="row" style="top:630px"><div class="g"><span class="ln">37</span></div><div class="tx"></div></div>
<div class="row" style="top:645px"><div class="g"><span class="ln">38</span></div><div class="tx"></div></div>
<div class="row" style="top:660px"><div class="g"><span class="ln">39</span></div><div class="tx"></div></div>
<div class="row" style="top:675px"><div class="g"><span class="ln">40</span></div><div class="tx"></div></div>
<div class="row" style="top:690px"><div class="g"><span class="ln">41</span></div><div class="tx"></div></div>
<div class="row" style="top:705px"><div class="g"><span class="ln">42</span></div><div class="tx"></div></div>
<div class="row" style="top:720px"><div class="g"><span class="ln">43</span></div><div class="tx"></div></div>
<div class="row" style="top:735px"><div class="g"><span class="ln">44</span></div><div class="tx"><span class="d" style="width:532px">----------------------------------------------------------------------------</span></div></div>
<div class="row" style="top:750px"><div class="g"><span class="ln">45</span></div><div class="tx"><span class="d" style="width:21px">---</span><span class="t" style="width:7px"><svg width="6" height="5" viewBox="0 0 6 5"><path d="M0.5 0.2l2.3 2.3l-2.3 2.3M2.9 0.2l2.3 2.3l-2.3 2.3" fill="none" stroke="#c2c2c2" stroke-width="0.9"/></svg></span><span class="a">@section</span><span class="c"> </span><span class="e">Creation</span></div></div>
<div class="row" style="top:765px"><div class="g"><span class="ln">46</span></div><div class="tx"><span class="d" style="width:532px">----------------------------------------------------------------------------</span></div></div>
<div class="row" style="top:780px"><div class="g"><span class="ln">47</span></div><div class="tx"></div></div>
<div class="row" style="top:795px"><div class="g"><span class="ln">48</span></div><div class="tx"></div></div>
<div class="row" style="top:810px"><div class="g"><span class="ln">49</span></div><div class="tx"><span class="d" style="width:21px">---</span><span class="c"> </span><span class="a">@function</span><span class="c"> new</span></div></div>
<div class="row" style="top:825px"><div class="g"><span class="ln">50</span></div><div class="tx"><span class="d" style="width:21px">---</span><span class="c"> </span><span class="a">@desc</span><span class="c"> Creates a new script unit.</span></div></div>
<div class="row" style="top:840px"><div class="g"><span class="ln">51</span></div><div class="tx"><span class="d" style="width:21px">---</span><span class="c"> </span><span class="a">@p</span><span class="c"> </span><span class="e">army</span><span class="c"> army, Army the target unit is a member of.</span></div></div>
<div class="row" style="top:855px"><div class="g"><span class="ln">52</span></div><div class="tx"><span class="d" style="width:21px">---</span><span class="c"> </span><span class="a">@p</span><span class="c"> </span><span class="e">object</span><span class="c"> reference, Reference for the unit. Can be an integer number representing the unit&#x27;s index within the army (&#x27;1&#x27; is </span></div></div>
<div class="row" style="top:870px"><div class="g"><svg width="10" height="5" viewBox="0 0 10 5" style="position:absolute;right:20px;top:5px"><path d="M3 0.5L1 2.5H8.6M6 0.6L8.8 2.5L6 4.4" fill="none" stroke="#8c8c8c" stroke-width="0.9"/></svg></div><div class="tx"><span class="c">generally the general, for example) or a string name. If a string name, this must match the script name given to the unit in </span></div></div>
<div class="row" style="top:885px"><div class="g"><svg width="10" height="5" viewBox="0 0 10 5" style="position:absolute;right:20px;top:5px"><path d="M3 0.5L1 2.5H8.6M6 0.6L8.8 2.5L6 4.4" fill="none" stroke="#8c8c8c" stroke-width="0.9"/></svg></div><div class="tx"><span class="c">either the battle xml or in the battle<i class="us">_</i>set<i class="us">_</i>piece<i class="us">_</i>armies<i class="us">_</i>units<i class="us">_</i>junctions table.</span></div></div>
<div class="row" style="top:900px"><div class="g"><span class="ln">53</span></div><div class="tx"><span class="d" style="width:21px">---</span><span class="c"> </span><span class="a">@return</span><span class="c"> script<i class="us">_</i>unit</span></div></div>
<div class="row" style="top:915px"><div class="g"><span class="ln">54</span><svg width="11" height="7" viewBox="0 0 11 7" style="position:absolute;left:39px;top:4px"><path d="M0 0h11L5.5 7z" fill="#a6a6a6"/></svg></div><div class="tx"><span class="k">function</span> <span class="v">script<i class=u>_</i>unit:</span>new<span class="o">(</span><span class="v">new<i class=u>_</i>army</span><span class="o">,</span> <span class="v">new<i class=u>_</i>ref</span><span class="o">)</span></div></div>
</div>
</body></html>
